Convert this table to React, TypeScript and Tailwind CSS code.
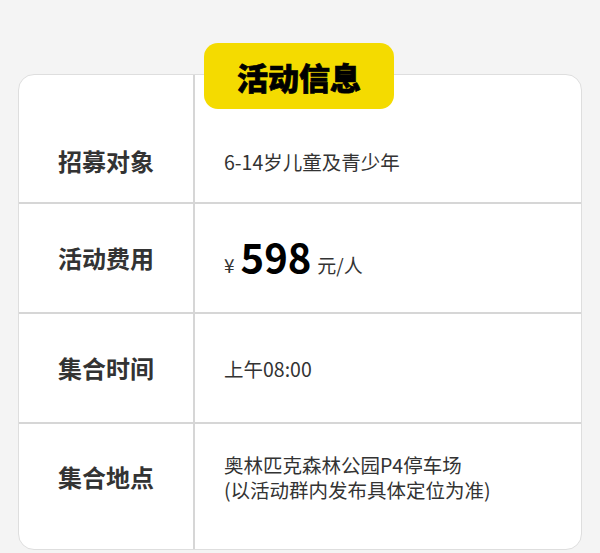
const rows = [
  { label: "招募对象", kind: "text", value: ["6-14岁儿童及青少年"] },
  { label: "活动费用", kind: "price" },
  { label: "集合时间", kind: "text", value: ["上午08:00"] },
  {
    label: "集合地点",
    kind: "text",
    value: ["奥林匹克森林公园P4停车场", "(以活动群内发布具体定位为准)"],
  },
];

// row heights, borders and per-row padding (the first row sits under the tab)
const rowClass = ["h-[129px] border-b-2", "h-[110px] border-b-2", "h-[110px] border-b-2", "h-[125px]"];
const cellPad = ["pt-[45px]", "", "", "pb-[20px]"];

export default function App() {
  return (
    <div
      className="h-[553px] w-[600px] overflow-hidden bg-[#f4f4f4] px-[18px] pt-[74px]"
      style={{ fontFamily: '"Noto Sans CJK SC", "Noto Sans", sans-serif' }}
    >
      <div className="relative rounded-[16px] border border-[#dedede] bg-white">
        <div className="absolute left-[185px] top-[-32px] z-10 flex h-[66px] w-[190px] items-center justify-center rounded-[14px] bg-[#f4db00]">
          <span className="text-[31px] font-black leading-none text-black [-webkit-text-stroke:0.7px_black]">
            活动信息
          </span>
        </div>
        <div className="flex flex-col">
          {rows.map((row, i) => (
            <div key={row.label} className={`flex border-[#d6d6d6] ${rowClass[i]}`}>
              <div
                className={`flex w-[176px] shrink-0 items-center justify-center border-r-2 border-[#d6d6d6] ${cellPad[i]}`}
              >
                <span className="text-[24px] font-bold text-[#333333]">{row.label}</span>
              </div>
              <div className={`flex flex-1 items-center pl-[29px] ${cellPad[i]}`}>
                {row.kind === "price" ? (
                  <div className="flex items-baseline">
                    <span className="mr-[6px] text-[19px] text-[#333333]">¥</span>
                    <span className="mr-[6px] text-[40px] font-bold leading-none text-black">598</span>
                    <span className="text-[19px] text-[#333333]">元/人</span>
                  </div>
                ) : (
                  <div className="flex flex-col text-[19.5px] leading-[25px] text-[#333333]">
                    {row.value!.map((line) => (
                      <span key={line}>{line}</span>
                    ))}
                  </div>
                )}
              </div>
            </div>
          ))}
        </div>
      </div>
    </div>
  );
}
